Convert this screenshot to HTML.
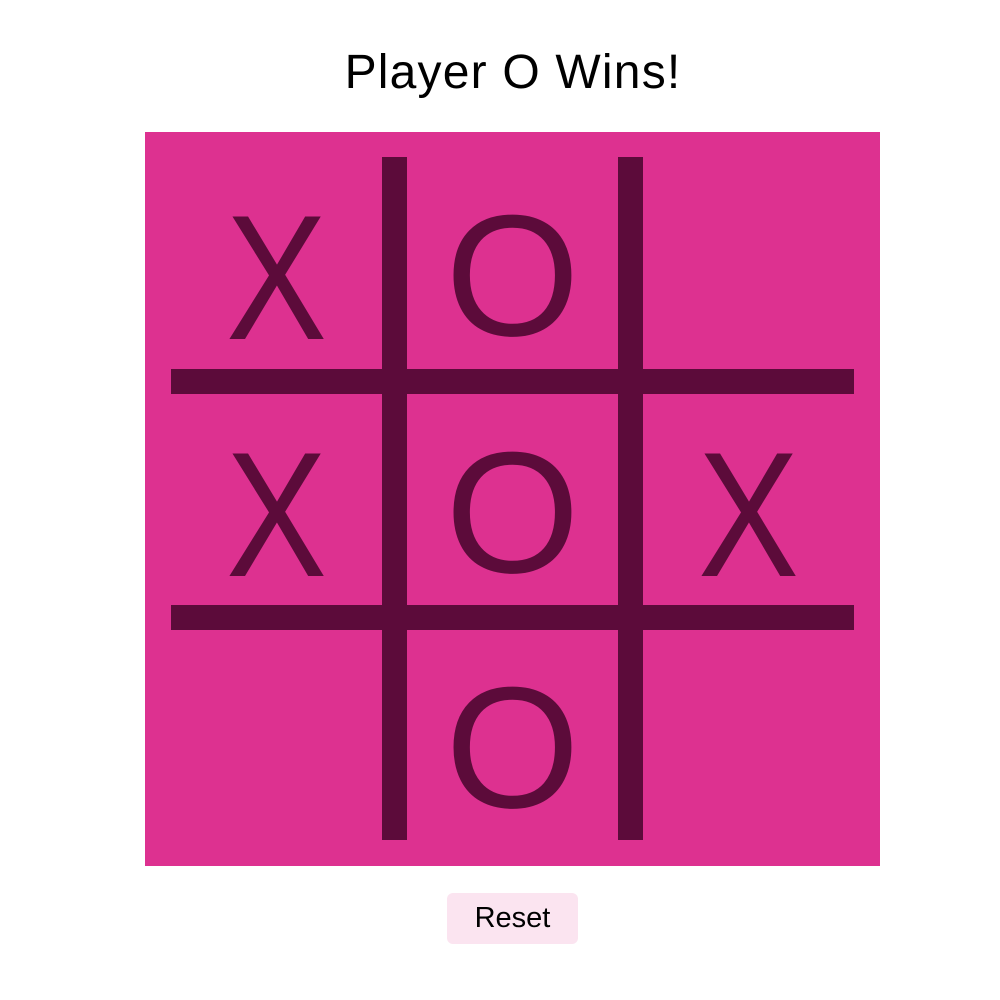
<!DOCTYPE html>
<html><head><style>
body{margin:0;width:1000px;height:1000px;background:#fff;font-family:"Liberation Sans",sans-serif;position:relative;overflow:hidden}
h1{position:absolute;top:43px;left:13px;width:1000px;margin:0;text-align:center;font-weight:normal;font-size:48px;letter-spacing:1.2px;line-height:60px;color:#000}
.board{position:absolute;left:145px;top:132px;width:735px;height:734px;background:#dd3190}
.l{position:absolute;background:#5c0b3a}
.c{position:absolute;width:211px;text-align:center;font-size:178px;line-height:178px;color:#5c0b3a}
.x{transform:scaleX(0.85)}
.o{transform:scaleX(0.97) scaleY(0.97)}
button{position:absolute;left:447px;top:893px;width:131px;height:51px;background:#fbe4f0;border:none;border-radius:6px;font-family:"Liberation Sans",sans-serif;font-size:29px;color:#000;padding:0}
</style></head><body>
<h1>Player O Wins!</h1>
<div class="board">
<div class="l" style="left:237px;top:25px;width:25px;height:683px"></div>
<div class="l" style="left:473px;top:25px;width:25px;height:683px"></div>
<div class="l" style="left:26px;top:237px;width:683px;height:25px"></div>
<div class="l" style="left:26px;top:473px;width:683px;height:25px"></div>
<div class="c x" style="left:26px;top:57px">X</div>
<div class="c o" style="left:262px;top:55px">O</div>
<div class="c x" style="left:26px;top:294px">X</div>
<div class="c o" style="left:262px;top:292px">O</div>
<div class="c x" style="left:498px;top:294px">X</div>
<div class="c o" style="left:262px;top:527px">O</div>
</div>
<button>Reset</button>
</body></html>
